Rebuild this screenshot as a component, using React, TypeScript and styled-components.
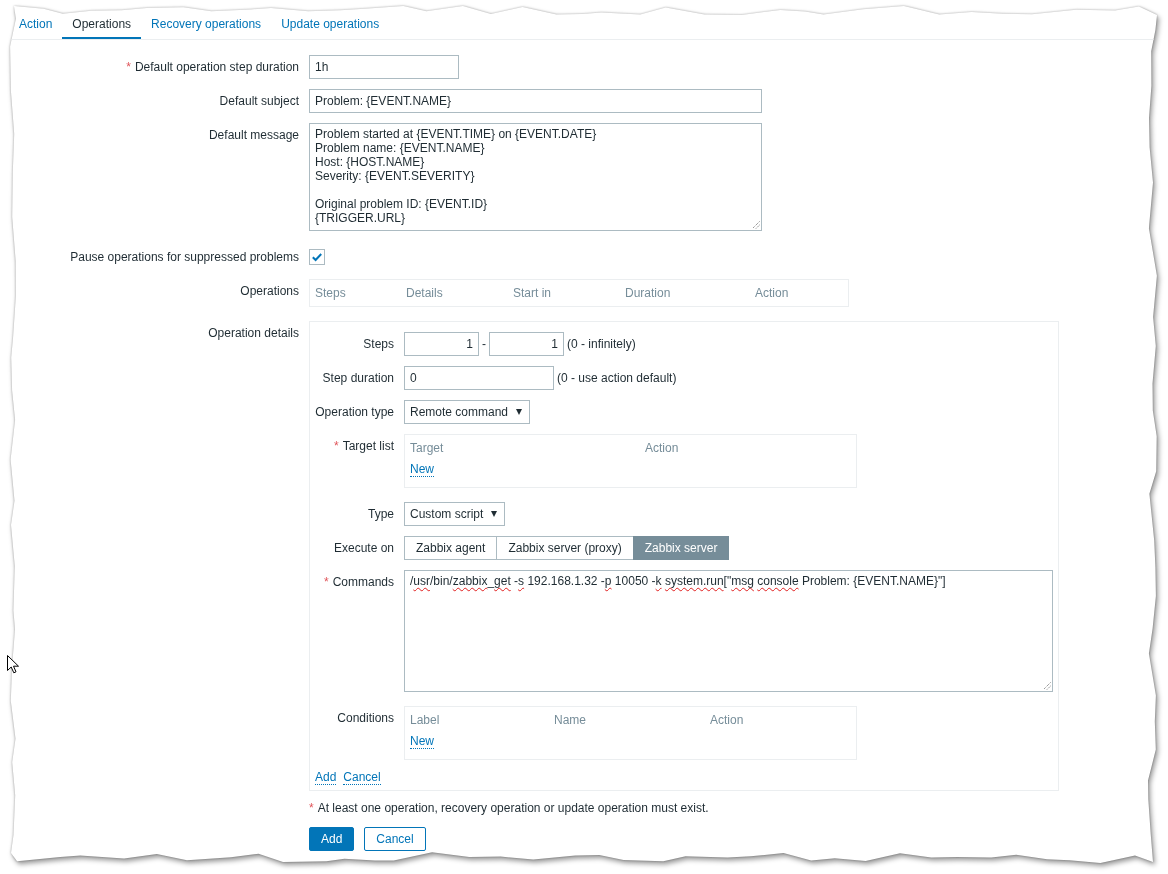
import React from 'react';
import styled, { createGlobalStyle } from 'styled-components';

const GlobalStyle = createGlobalStyle`
  body {
    margin: 0;
    background: #fff;
    font-family: "Liberation Sans", Arial, sans-serif;
    font-size: 12px;
    color: #1f2c33;
  }
`;

// jagged outline of the torn screenshot sheet
function tornEdge(): string {
  let seed = 11;
  const rnd = () => {
    seed = (seed * 16807) % 2147483647;
    return seed / 2147483647;
  };
  const pts: string[] = [];
  const p = (x: number, y: number) => pts.push(`${x.toFixed(1)}px ${y.toFixed(1)}px`);
  for (let x = 14; x < 1154; x += 18 + rnd() * 26) p(x, 6 + rnd() * 9);
  p(1157, 15);
  for (let y = 30; y < 858; y += 18 + rnd() * 30) p(1148 + rnd() * 9, y);
  p(1153, 862);
  for (let x = 1135; x > 14; x -= 18 + rnd() * 26) p(x, 852 + rnd() * 11);
  p(11, 853);
  for (let y = 835; y > 18; y -= 18 + rnd() * 30) p(10 + rnd() * 6, y);
  return `polygon(${pts.join(', ')})`;
}
const TORN = tornEdge();

const Page = styled.div`
  position: relative;
  width: 1168px;
  height: 874px;
  overflow: hidden;
`;

const Shadow = styled.div`
  height: 100%;
  filter: drop-shadow(0 0 1px rgba(0, 0, 0, 0.3)) drop-shadow(2px 3px 2.5px rgba(0, 0, 0, 0.4));
`;

const Sheet = styled.div`
  height: 100%;
  box-sizing: border-box;
  padding: 10px 0 0 9px;
  background: #fff;
  clip-path: ${TORN};
`;

const TabBar = styled.div`
  display: flex;
  border-bottom: 1px solid #ebeef0;
`;

const Tab = styled.div<{ $active?: boolean }>`
  padding: 1px 10px 0;
  line-height: 26px;
  color: ${(p) => (p.$active ? '#1f2c33' : '#0275b8')};
  border-bottom: 2px solid ${(p) => (p.$active ? '#0275b8' : 'transparent')};
`;

const Form = styled.div`
  padding-top: 15px;
`;

const Row = styled.div<{ $mb?: number; $center?: boolean }>`
  display: flex;
  align-items: ${(p) => (p.$center ? 'center' : 'flex-start')};
  margin-bottom: ${(p) => p.$mb ?? 10}px;
`;

const Label = styled.div<{ $inner?: boolean }>`
  flex: none;
  box-sizing: border-box;
  width: ${(p) => (p.$inner ? 89 : 300)}px;
  padding-right: 10px;
  text-align: right;
  line-height: 24px;
  white-space: nowrap;
`;

const Req = styled.span`
  color: #e0555a;
  margin-right: 4px;
`;

const Field = styled.div`
  display: flex;
  align-items: center;
`;

const Input = styled.div<{ $w: number; $right?: boolean }>`
  box-sizing: border-box;
  width: ${(p) => p.$w}px;
  height: 24px;
  line-height: 22px;
  padding: 0 5px;
  border: 1px solid #acbbc2;
  text-align: ${(p) => (p.$right ? 'right' : 'left')};
  background: #fff;
`;

const Dash = styled.span`
  margin: 0 3px;
`;

const Hint = styled.span`
  margin-left: 3px;
`;

const TextBox = styled.div<{ $w: number; $h: number }>`
  position: relative;
  box-sizing: border-box;
  width: ${(p) => p.$w}px;
  height: ${(p) => p.$h}px;
  padding: 3px 5px;
  line-height: 14px;
  border: 1px solid #acbbc2;
  white-space: pre;
  overflow: hidden;
`;

const GripMark = styled.svg`
  position: absolute;
  right: 1px;
  bottom: 1px;
`;

const Grip = () => (
  <GripMark width="9" height="9" viewBox="0 0 9 9">
    <path d="M8.5 1.5 L1.5 8.5 M8.5 5 L5 8.5" stroke="#6b6b6b" strokeWidth="1" strokeDasharray="1 1" />
  </GripMark>
);

const Typo = styled.span`
  text-decoration: underline wavy #e02020;
  text-decoration-thickness: 1px;
  text-underline-offset: 2px;
  text-decoration-skip-ink: none;
`;

const CheckBox = styled.div`
  box-sizing: border-box;
  width: 16px;
  height: 16px;
  border: 1px solid #acbbc2;
  display: flex;
  align-items: center;
  justify-content: center;
`;

const HeadGrid = styled.div<{ $cols: string; $w: number }>`
  box-sizing: border-box;
  width: ${(p) => p.$w}px;
  display: grid;
  grid-template-columns: ${(p) => p.$cols};
  border: 1px solid #ebeef0;
  height: 28px;
  align-items: center;
  padding-left: 5px;
`;

const HeadCell = styled.div`
  color: #768d99;
`;

const Details = styled.div`
  box-sizing: border-box;
  width: 750px;
  border: 1px solid #ebeef0;
  padding: 10px 5px 6px 5px;
`;

const Select = styled.div<{ $w: number }>`
  box-sizing: border-box;
  width: ${(p) => p.$w}px;
  height: 24px;
  padding: 0 7px 0 5px;
  border: 1px solid #acbbc2;
  display: flex;
  align-items: center;
  justify-content: space-between;
`;

const Arrow = styled.span`
  width: 0;
  height: 0;
  border-left: 3.5px solid transparent;
  border-right: 3.5px solid transparent;
  border-top: 6px solid #1f2c33;
`;

const Segmented = styled.div`
  display: flex;
`;

const Seg = styled.div<{ $on?: boolean }>`
  height: 24px;
  box-sizing: border-box;
  line-height: 22px;
  padding: 0 11px;
  margin-left: -1px;
  border: 1px solid ${(p) => (p.$on ? '#768d99' : '#acbbc2')};
  background: ${(p) => (p.$on ? '#768d99' : '#fff')};
  color: ${(p) => (p.$on ? '#fff' : '#1f2c33')};
  &:first-child {
    margin-left: 0;
  }
`;

const ListBox = styled.div`
  box-sizing: border-box;
  width: 453px;
  height: 54px;
  border: 1px solid #ebeef0;
  padding: 6px 5px 0 5px;
  line-height: 14px;
`;

const ListHead = styled.div<{ $cols: string }>`
  display: grid;
  grid-template-columns: ${(p) => p.$cols};
  color: #768d99;
  margin-bottom: 7px;
`;

const Link = styled.span`
  color: #0275b8;
  border-bottom: 1px dotted #0275b8;
  margin-right: 7px;
`;

const LinkRow = styled.div`
  line-height: 14px;
`;

const Note = styled.div`
  line-height: 14px;
  padding-left: 300px;
  margin-bottom: 12px;
`;

const Buttons = styled.div`
  display: flex;
  gap: 10px;
  padding-left: 300px;
`;

const Button = styled.div<{ $primary?: boolean }>`
  height: 24px;
  box-sizing: border-box;
  line-height: 22px;
  padding: 0 11px;
  border-radius: 2px;
  border: 1px solid #0275b8;
  background: ${(p) => (p.$primary ? '#0275b8' : '#fff')};
  color: ${(p) => (p.$primary ? '#fff' : '#0275b8')};
`;

const Cursor = styled.svg`
  position: absolute;
  left: 7px;
  top: 655px;
`;

const message = `Problem started at {EVENT.TIME} on {EVENT.DATE}
Problem name: {EVENT.NAME}
Host: {HOST.NAME}
Severity: {EVENT.SEVERITY}

Original problem ID: {EVENT.ID}
{TRIGGER.URL}`;

export default function App() {
  return (
    <Page>
      <GlobalStyle />
      <Shadow>
        <Sheet>
          <TabBar>
            <Tab>Action</Tab>
            <Tab $active>Operations</Tab>
            <Tab>Recovery operations</Tab>
            <Tab>Update operations</Tab>
          </TabBar>

          <Form>
            <Row>
              <Label><Req>*</Req>Default operation step duration</Label>
              <Input $w={150}>1h</Input>
            </Row>
            <Row>
              <Label>Default subject</Label>
              <Input $w={453}>Problem: {'{EVENT.NAME}'}</Input>
            </Row>
            <Row $mb={14}>
              <Label>Default message</Label>
              <TextBox $w={453} $h={108}>
                {message}
                <Grip />
              </TextBox>
            </Row>
            <Row $mb={10} $center>
              <Label>Pause operations for suppressed problems</Label>
              <CheckBox>
                <svg width="12" height="12" viewBox="0 0 12 12">
                  <path d="M1.8 6.2 L4.6 9 L10.2 3" fill="none" stroke="#0275b8" strokeWidth="2" />
                </svg>
              </CheckBox>
            </Row>
            <Row $mb={14}>
              <Label>Operations</Label>
              <HeadGrid $w={540} $cols="91px 107px 112px 130px 1fr">
                <HeadCell>Steps</HeadCell>
                <HeadCell>Details</HeadCell>
                <HeadCell>Start in</HeadCell>
                <HeadCell>Duration</HeadCell>
                <HeadCell>Action</HeadCell>
              </HeadGrid>
            </Row>
            <Row>
              <Label>Operation details</Label>
              <Details>
                <Row>
                  <Label $inner>Steps</Label>
                  <Field>
                    <Input $w={75} $right>1</Input>
                    <Dash>-</Dash>
                    <Input $w={75} $right>1</Input>
                    <Hint>(0 - infinitely)</Hint>
                  </Field>
                </Row>
                <Row>
                  <Label $inner>Step duration</Label>
                  <Field>
                    <Input $w={150}>0</Input>
                    <Hint>(0 - use action default)</Hint>
                  </Field>
                </Row>
                <Row>
                  <Label $inner>Operation type</Label>
                  <Select $w={126}>Remote command<Arrow /></Select>
                </Row>
                <Row $mb={14}>
                  <Label $inner><Req>*</Req>Target list</Label>
                  <ListBox>
                    <ListHead $cols="235px 1fr">
                      <span>Target</span>
                      <span>Action</span>
                    </ListHead>
                    <Link>New</Link>
                  </ListBox>
                </Row>
                <Row>
                  <Label $inner>Type</Label>
                  <Select $w={101}>Custom script<Arrow /></Select>
                </Row>
                <Row>
                  <Label $inner>Execute on</Label>
                  <Segmented>
                    <Seg>Zabbix agent</Seg>
                    <Seg>Zabbix server (proxy)</Seg>
                    <Seg $on>Zabbix server</Seg>
                  </Segmented>
                </Row>
                <Row $mb={14}>
                  <Label $inner><Req>*</Req>Commands</Label>
                  <TextBox $w={649} $h={122}>
                    /<Typo>usr</Typo>/bin/<Typo>zabbix</Typo>_<Typo>get</Typo> -<Typo>s</Typo> 192.168.1.32 -<Typo>p</Typo> 10050 -<Typo>k</Typo>{' '}
                    <Typo>system.run</Typo>["<Typo>msg</Typo> <Typo>console</Typo> Problem: {'{EVENT.NAME}'}"]
                    <Grip />
                  </TextBox>
                </Row>
                <Row $mb={10}>
                  <Label $inner>Conditions</Label>
                  <ListBox>
                    <ListHead $cols="144px 156px 1fr">
                      <span>Label</span>
                      <span>Name</span>
                      <span>Action</span>
                    </ListHead>
                    <Link>New</Link>
                  </ListBox>
                </Row>
                <LinkRow>
                  <Link>Add</Link>
                  <Link>Cancel</Link>
                </LinkRow>
              </Details>
            </Row>
            <Note><Req>*</Req>At least one operation, recovery operation or update operation must exist.</Note>
            <Buttons>
              <Button $primary>Add</Button>
              <Button>Cancel</Button>
            </Buttons>
          </Form>
        </Sheet>
      </Shadow>
      <Cursor width="13" height="19" viewBox="0 0 13 19">
        <path d="M0.5 0.5 L0.5 15.5 L4.2 12 L6.8 17.8 L9 16.8 L6.5 11.2 L11.5 11.2 Z" fill="#fff" stroke="#000" strokeWidth="1" strokeLinejoin="miter" />
      </Cursor>
    </Page>
  );
}
